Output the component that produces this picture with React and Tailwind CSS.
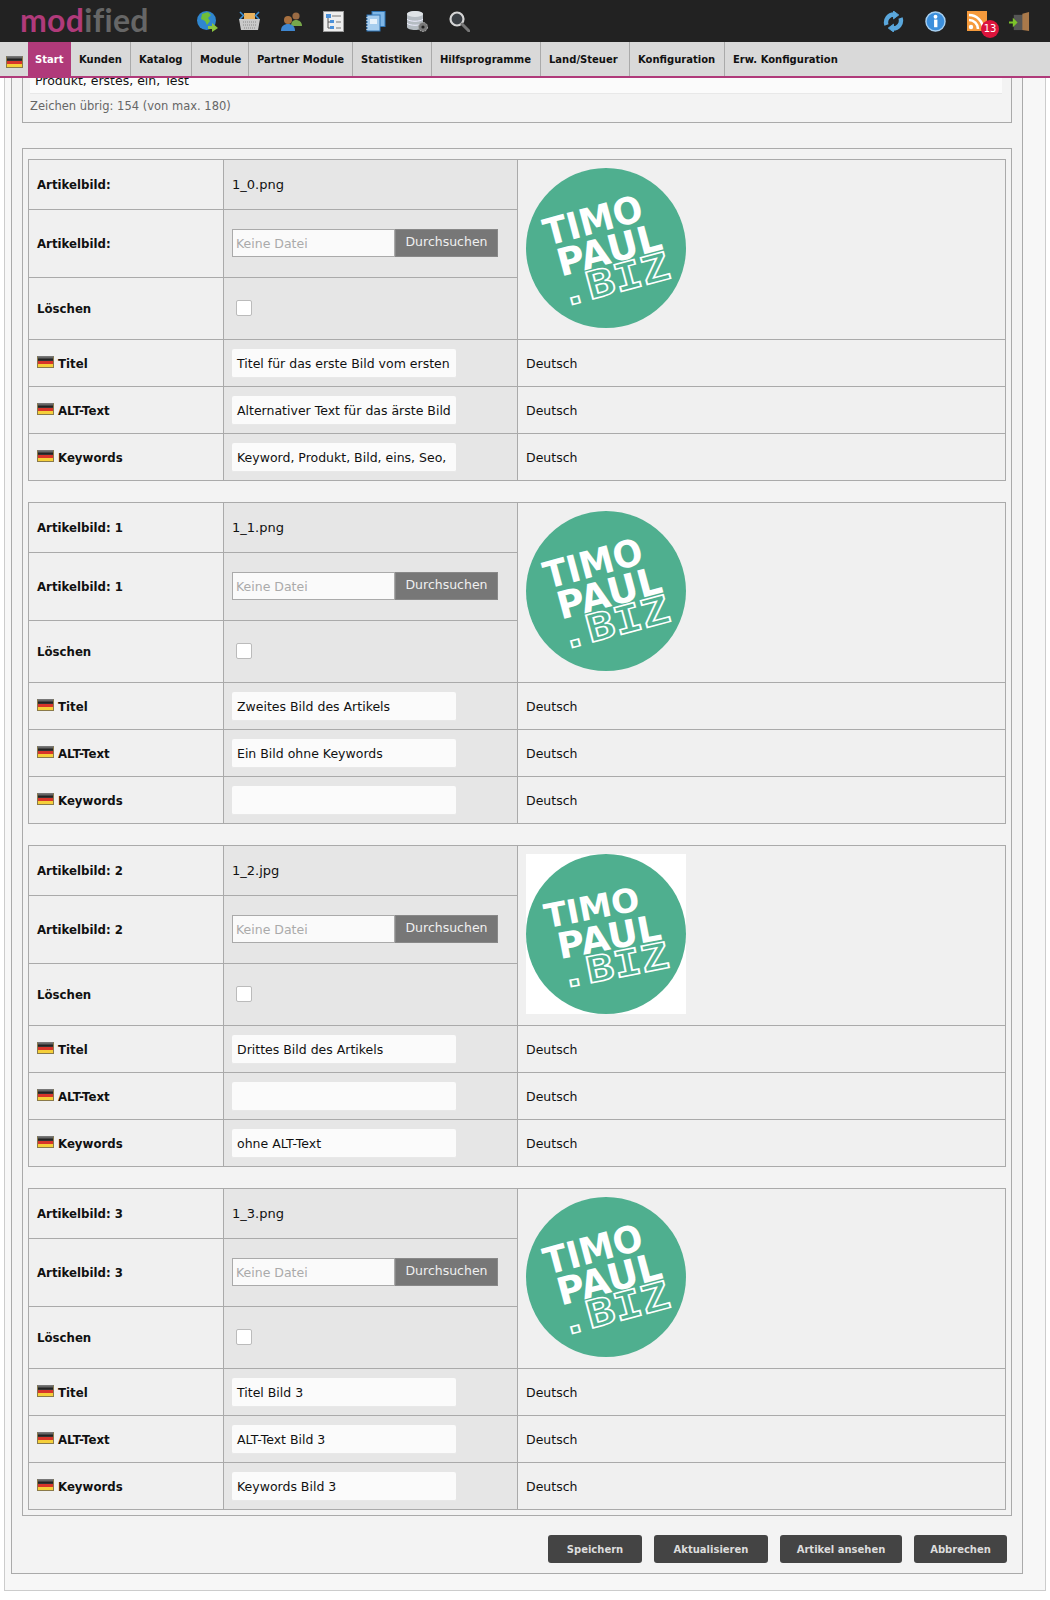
import React from 'react';

function Flag({ className = '' }) {
  return (
    <span className={`inline-block w-[17px] h-[12px] shrink-0 border border-[#8a7a4a] border-t-[#777] bg-[linear-gradient(#777_0,#222_25%,#333_35%,#d8352a_45%,#d8352a_65%,#f5cf3a_75%,#f5cf3a_100%)] ${className}`} />
  );
}

function Logo({ plain }) {
  // Bild 2 ist ein JPG mit weißem Grund und etwas anderer Drehung
  const t = plain
    ? { rot: -11, a: [23, 63, 33, 96], b: [30, 96, 36, 105], c: [26, 125, 36, 111] }
    : { rot: -15, a: [24, 63, 37, 101], b: [29, 96, 38, 107], c: [23, 126, 38, 113] };
  return (
    <div className={`w-[160px] h-[160px] ${plain ? 'bg-white' : ''}`}>
      <svg width="160" height="160" viewBox="0 0 160 160">
        <circle cx="80" cy="80" r="80" fill="#4faf8f" />
        <g transform={`rotate(${t.rot} 80 80)`} fontFamily="'DejaVu Sans', sans-serif" fontWeight="700" fill="#fff">
          <text x={t.a[0]} y={t.a[1]} fontSize={t.a[2]} textLength={t.a[3]} lengthAdjust="spacingAndGlyphs">TIMO</text>
          <text x={t.b[0]} y={t.b[1]} fontSize={t.b[2]} textLength={t.b[3]} lengthAdjust="spacingAndGlyphs">PAUL</text>
          <text x={t.c[0]} y={t.c[1]} fontSize={t.c[2]} textLength={t.c[3]} lengthAdjust="spacingAndGlyphs" fontFamily="'DejaVu Sans Mono', monospace" fill="#4faf8f" stroke="#fff" strokeWidth="1.5">.BIZ</text>
        </g>
      </svg>
    </div>
  );
}

function FileInput() {
  return (
    <div className="flex h-[28px] w-[266px] -mt-[2px]">
      <div className="w-[163px] bg-[#fafafa] border border-[#aaa] pl-[3px] leading-[27px] text-[#aaa]">Keine Datei</div>
      <div className="flex-1 bg-[#777] border border-[#888] text-[#f0f0f0] text-center leading-[24px]">Durchsuchen</div>
    </div>
  );
}

function TextRow({ label, value, last }) {
  return (
    <div className={`grid grid-cols-[195px_294px_1fr] ${last ? 'h-[46px]' : 'h-[47px] border-b border-[#aaa]'}`}>
      <div className="flex items-center gap-[4px] pl-[8px] border-r border-[#aaa] font-bold text-[11.75px]">
        <Flag className="-mt-[2px]" />
        <span className="mt-[4px]">{label}</span>
      </div>
      <div className="flex items-center pl-[8px] border-r border-[#aaa] bg-[#e6e6e6]">
        <div className="w-[224px] h-[29px] bg-[#fbfbfb] border-b border-[#e8e8e8] rounded-[2px] px-[5px] leading-[30px] overflow-hidden whitespace-nowrap">{value}</div>
      </div>
      <div className="flex items-center pl-[8px] pt-[2px]">Deutsch</div>
    </div>
  );
}

function ImageTable({ title, file, plain, titel, alt, keywords }) {
  return (
    <div className="border border-[#aaa] bg-[#f0f0f0] text-[12.5px] text-[#111]">
      <div className="grid grid-cols-[489px_1fr] border-b border-[#aaa]">
        <div className="border-r border-[#aaa]">
          <div className="grid grid-cols-[195px_1fr] h-[50px] border-b border-[#aaa]">
            <div className="flex items-center pl-[8px] pt-[2px] border-r border-[#aaa] font-bold text-[11.75px]">{title}</div>
            <div className="flex items-center pl-[8px] bg-[#e6e6e6] text-[13px]">{file}</div>
          </div>
          <div className="grid grid-cols-[195px_1fr] h-[68px] border-b border-[#aaa]">
            <div className="flex items-center pl-[8px] pt-[2px] border-r border-[#aaa] font-bold text-[11.75px]">{title}</div>
            <div className="flex items-center pl-[8px] bg-[#e6e6e6]"><FileInput /></div>
          </div>
          <div className="grid grid-cols-[195px_1fr] h-[61px]">
            <div className="flex items-center pl-[8px] pt-[2px] border-r border-[#aaa] font-bold text-[11.75px]">Löschen</div>
            <div className="flex items-center pl-[12px] bg-[#e6e6e6]">
              <span className="w-[16px] h-[16px] -mt-[1px] bg-white border border-[#bbb] rounded-[2px]" />
            </div>
          </div>
        </div>
        <div className="pl-[8px] pt-[8px]"><Logo plain={plain} /></div>
      </div>
      <TextRow label="Titel" value={titel} />
      <TextRow label="ALT-Text" value={alt} />
      <TextRow label="Keywords" value={keywords} last />
    </div>
  );
}

function Btn({ children, w }) {
  return (
    <div className={`${w} h-[28px] bg-[#444] rounded-[3px] text-[#ddd] font-bold text-[10px] text-center leading-[30px]`}>{children}</div>
  );
}

function TopIcons() {
  return (
    <div className="flex items-center gap-[21px]">
      {/* Globus */}
      <svg width="21" height="21" viewBox="0 0 21 21"><circle cx="9.5" cy="9.5" r="9.5" fill="#2f86cf" /><path d="M5 3l6-2 3 3-3 3 2 3-3 4-2-4-4-2z" fill="#6fbf3a" /><path d="M11 15h4v-3l6 5-6 4v-3h-4z" fill="#8cc63f" /></svg>
      {/* Warenkorb */}
      <svg width="21" height="21" viewBox="0 0 21 21"><rect x="5" y="2" width="11" height="6" fill="#eab35f" /><path d="M1 1l4 4M20 1l-4 4M1 8l3-3M20 8l-3-3" stroke="#3a8fd6" strokeWidth="1.6" /><path d="M0 8h21l-2 11H2z" fill="#c9c9c9" /><path d="M4 11h13M4 14h13M5 17h11" stroke="#888" strokeDasharray="1 1" /></svg>
      {/* Kunden */}
      <svg width="21" height="21" viewBox="0 0 21 21"><circle cx="15" cy="5" r="3.6" fill="#9a6b44" /><path d="M10 15c0-4 2-6 5-6s6 2 6 6z" fill="#78a84a" /><circle cx="7" cy="9" r="4" fill="#a8703f" /><path d="M0 20c0-5 3-7 7-7s7 2 7 7z" fill="#3f87d0" /></svg>
      {/* Sitemap */}
      <svg width="21" height="21" viewBox="0 0 21 21"><rect x="0.5" y="0.5" width="20" height="20" fill="#eee" stroke="#999" /><rect x="3" y="3" width="5" height="4" fill="#4a90d9" /><rect x="7" y="9" width="4" height="3" fill="#4a90d9" /><rect x="7" y="15" width="4" height="3" fill="#4a90d9" /><path d="M9 5h9M13 11h5M13 17h5" stroke="#777" /><path d="M5 7v10h2M5 11h2" stroke="#555" fill="none" /></svg>
      {/* Notizbücher */}
      <svg width="21" height="21" viewBox="0 0 21 21"><rect x="7" y="0.5" width="13" height="15" fill="#7fb6e6" stroke="#2f75b5" /><rect x="2" y="4" width="13" height="16" fill="#a7cdee" stroke="#2f75b5" /><rect x="5" y="8" width="7" height="5" fill="#e8f2fb" /><path d="M2 6v13" stroke="#fff" strokeDasharray="1 2" /></svg>
      {/* Datenbank */}
      <svg width="21" height="21" viewBox="0 0 21 21"><path d="M0 3c0-4 16-4 16 0v13c0 4-16 4-16 0z" fill="#b5bcc2" /><ellipse cx="8" cy="3" rx="8" ry="3" fill="#dfe3e6" /><path d="M0 8c2 3 14 3 16 0M0 12c2 3 14 3 16 0" stroke="#eef" fill="none" /><circle cx="16" cy="16" r="4.5" fill="#777" stroke="#aaa" strokeDasharray="2 1" /><circle cx="16" cy="16" r="1.6" fill="#222" /></svg>
      {/* Suche */}
      <svg width="21" height="21" viewBox="0 0 21 21"><circle cx="8" cy="8" r="6.5" fill="#3a3f44" stroke="#d5d5d5" strokeWidth="2.2" /><path d="M13 13l7 7" stroke="#777" strokeWidth="3" strokeLinecap="round" /></svg>
    </div>
  );
}

export default function App() {
  const images = [
    { title: 'Artikelbild:', file: '1_0.png', titel: 'Titel für das erste Bild vom ersten', alt: 'Alternativer Text für das ärste Bild', keywords: 'Keyword, Produkt, Bild, eins, Seo,' },
    { title: 'Artikelbild: 1', file: '1_1.png', titel: 'Zweites Bild des Artikels', alt: 'Ein Bild ohne Keywords', keywords: '' },
    { title: 'Artikelbild: 2', file: '1_2.jpg', plain: true, titel: 'Drittes Bild des Artikels', alt: '', keywords: 'ohne ALT-Text' },
    { title: 'Artikelbild: 3', file: '1_3.png', titel: 'Titel Bild 3', alt: 'ALT-Text Bild 3', keywords: 'Keywords Bild 3' },
  ];
  const nav = [
    { label: 'Kunden', w: 'w-[60px]' },
    { label: 'Katalog', w: 'w-[61px]' },
    { label: 'Module', w: 'w-[57px]' },
    { label: 'Partner Module', w: 'w-[104px]' },
    { label: 'Statistiken', w: 'w-[79px]' },
    { label: 'Hilfsprogramme', w: 'w-[109px]' },
    { label: 'Land/Steuer', w: 'w-[89px]' },
    { label: 'Konfiguration', w: 'w-[95px]' },
    { label: 'Erw. Konfiguration', w: 'w-[120px]' },
  ];

  return (
    <div className="w-[1050px] h-[1600px] overflow-hidden bg-white font-['DejaVu_Sans',sans-serif]">
      {/* Kopfzeile */}
      <div className="h-[42px] bg-[#222] flex items-center pl-[20px] pr-[20px]">
        <div className="w-[177px] text-[32px] leading-[42px] font-['Lato',sans-serif] font-bold tracking-[0.3px] [font-variant-ligatures:none] -mt-[2px]">
          <span className="text-[#b03a7a]">mod</span><span className="text-[#666]">ified</span>
        </div>
        <TopIcons />
        <div className="ml-auto flex items-center gap-[21px]">
          <svg width="21" height="21" viewBox="0 0 24 24" fill="none" stroke="#5aa7dc" strokeWidth="5"><path d="M4 16A9 9 0 0 1 13 4" /><path d="M12 0v9l6-4.5z" fill="#5aa7dc" strokeWidth="1" /><path d="M20 8a9 9 0 0 1-9 12" /><path d="M12 24v-9l-6 4.5z" fill="#5aa7dc" strokeWidth="1" /></svg>
          <svg width="21" height="21" viewBox="0 0 22 22"><circle cx="11" cy="11" r="10" fill="#3c8fdc" stroke="#a9d0f0" strokeWidth="1.5" /><rect x="9.5" y="9" width="3.5" height="8" fill="#fff" /><circle cx="11" cy="6" r="2" fill="#fff" /></svg>
          <div className="relative w-[21px] h-[21px]">
            <svg width="20" height="20" viewBox="0 0 20 20"><rect width="20" height="20" fill="#f59a3c" /><circle cx="4" cy="16" r="2.2" fill="#fff" /><path d="M2 9a9 9 0 0 1 9 9M2 4a14 14 0 0 1 14 14" stroke="#fff" strokeWidth="2.6" fill="none" /></svg>
            <span className="absolute left-[14px] top-[9px] w-[18px] h-[18px] rounded-full bg-[#dc143c] text-white text-[10px] leading-[18px] text-center">13</span>
          </div>
          <svg width="21" height="21" viewBox="0 0 22 22"><rect x="5" y="4" width="12" height="16" fill="#555" /><path d="M14 3l7-2v20l-7-1z" fill="#a9794a" /><path d="M0 11h4V7l5 5-5 5v-4H0z" fill="#7dc42a" /></svg>
        </div>
      </div>

      {/* Hauptmenü */}
      <div className="h-[36px] bg-[#d9d9d9] border-b-2 border-[#b03a7a] flex text-[10px] font-bold text-[#111]">
        <div className="w-[28px] pl-[6px] pt-[14px]"><Flag className="block" /></div>
        <div className="pl-[7px] w-[43px] bg-[#b03a7a] text-white leading-[35px]">Start</div>
        {nav.map(n => (
          <div key={n.label} className={`${n.w} pl-[8px] leading-[35px] border-r border-[#aaa] last:border-r-0 whitespace-nowrap`}>{n.label}</div>
        ))}
      </div>

      {/* Inhalt */}
      <div className="pl-[4px]">
        <div className="w-[1042px] h-[1513px] border-b border-l border-r border-[#ccc] bg-[#f7f7f7]">
          <div className="ml-[6px] w-[1012px] h-[1496px] border-l border-r border-b border-[#aaa] bg-[#f3f3f3] flex flex-col">
            <div className="ml-[10px] w-[990px] h-[45px] shrink-0 border-l border-r border-b border-[#aaa] px-[7px] text-[#111] text-[12.5px]">
              <div className="h-[16px] w-[972px] bg-[#fbfbfb] border-b border-[#e8e8e8] overflow-hidden pl-[5px]">
                <div className="-mt-[5px] leading-[16px]">Produkt, erstes, ein, Test</div>
              </div>
              <div className="mt-[3px] text-[11.5px] leading-[18px] text-[#666]">Zeichen übrig: 154 (von max. 180)</div>
            </div>
            <div className="mt-[25px] ml-[10px] w-[990px] border border-[#aaa] pt-[10px] px-[5px] pb-[5px] flex flex-col gap-[21px]">
              {images.map(img => <ImageTable key={img.file} {...img} />)}
            </div>
            <div className="flex justify-end gap-[12px] mt-[19px] pr-[15px]">
              <Btn w="w-[94px]">Speichern</Btn>
              <Btn w="w-[114px]">Aktualisieren</Btn>
              <Btn w="w-[122px]">Artikel ansehen</Btn>
              <Btn w="w-[93px]">Abbrechen</Btn>
            </div>
          </div>
        </div>
      </div>
    </div>
  );
}
